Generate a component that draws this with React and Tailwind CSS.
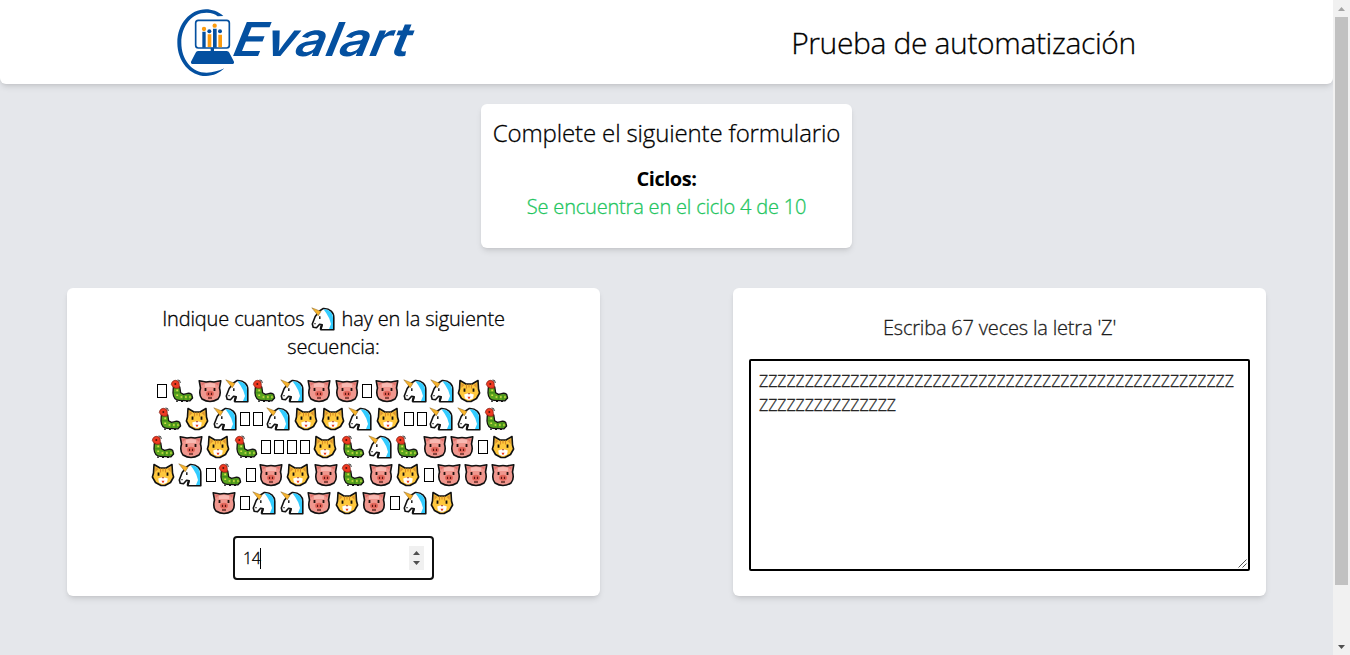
const ROWS = [
  "_bpubupp_puucb",
  "bcu__uccuc__uub",
  "bpcb____cbubpp_c",
  "cu_b_pcpbpc_ppp",
  "p_uupcp_uc",
];

function Unicorn() {
  return (
    <svg className="h-6 w-6" viewBox="0 0 24 24" role="img" aria-label="🦄">
      <path d="M8.5 4 L12 1.6 C19 1.2 23 5.5 22.8 11 L22.8 22.8 H9.8 L11.2 17.8 L8.6 17.2 L5.5 20.8 L2.2 20.3 L1.3 17 L4.2 9.5 Z" fill="#fff" stroke="#111" strokeWidth="1.6" strokeLinejoin="round" />
      <path d="M12.5 2.3 C18 2 22 6 22 11 V22 H18 L20 17 L18.3 11.5 L15.5 6.5 Z" fill="#33ccff" />
      <path d="M.8 .8 L10 4.4 L7.2 8.8 Z" fill="#f7b32b" stroke="#8a6420" strokeWidth=".5" />
      <path d="M8.8 9.3v2.8M3.4 16.6h1.2" stroke="#111" strokeWidth="1.4" fill="none" />
      <path d="M9.4 18.2H11.6L10.4 22.5H8.6Z" fill="#111" />
    </svg>
  );
}

function Pig() {
  return (
    <svg className="h-6 w-6" viewBox="0 0 24 24" role="img" aria-label="🐷">
      <path d="M1.2 1.7 L8 3 Q12 2 16 3 L22.8 1.7 L21.5 9 Q23.5 16 20 20 Q16 22.5 12 22.5 Q8 22.5 4 20 Q.5 16 2.5 9 Z" fill="#f0978e" stroke="#111" strokeWidth="1.6" strokeLinejoin="round" />
      <path d="M3 3.3L7 4.3L3.7 7ZM21 3.3L17 4.3L20.3 7Z" fill="#df746e" />
      <path d="M7 5Q12 3 17 5V8H7Z" fill="#f8b9b2" />
      <path d="M7.5 9v3M16.5 9v3" stroke="#24130f" strokeWidth="1.8" />
      <ellipse cx="12" cy="14.8" rx="4" ry="3" fill="#e4675b" />
      <path d="M10.5 13.7v2.2M13.5 13.7v2.2" stroke="#5c1714" strokeWidth="1.2" />
      <path d="M10 19h4" stroke="#4d1814" strokeWidth="1.3" />
    </svg>
  );
}

function Cat() {
  return (
    <svg className="h-6 w-6" viewBox="0 0 24 24" role="img" aria-label="🐱">
      <path d="M3 1.5 L9 5 H15 L21 1.5 L21.5 10 L22.6 14 L19.5 19.5 L14 22.5 H10 L4.5 19.5 L1.4 14 L2.5 10 Z" fill="#ffc83d" stroke="#111" strokeWidth="1.6" strokeLinejoin="round" />
      <path d="M4.3 4L7.5 6L4.3 9ZM19.7 4L16.5 6L19.7 9Z" fill="#dc9430" />
      <path d="M9.5 5.5v4M12 5.5v3M14.5 5.5v4" stroke="#d88a25" strokeWidth="1.1" />
      <path d="M7.5 9.5v3.2M16.5 9.5v3.2" stroke="#16110a" strokeWidth="1.8" />
      <path d="M12 14 L16.8 15.5 L16 19.5 L12 21.3 L8 19.5 L7.2 15.5 Z" fill="#fff" />
      <path d="M10.6 14h2.8L12 15.8Z" fill="#b5543a" />
      <path d="M10.5 17.7h3L12 20.5Z" fill="#f03a17" />
    </svg>
  );
}

function Bug() {
  return (
    <svg className="h-6 w-6" viewBox="0 0 24 24" role="img" aria-label="🐛">
      <path d="M3.3 8.5 L3 14 Q3.5 21 9 21.3 L20 21.8 L22.6 19 L21.6 15.2 Q19 13.6 16.5 14.7 L13.5 15.4 L10.6 13.7 L9.8 8Z" fill="#5aa51f" stroke="#111" strokeWidth="1.3" strokeLinejoin="round" />
      <path d="M1.3 5.5Q2 1.3 5.8 1.3Q9.5 1.6 9.3 5.5L9.3 9Q5 10 3 8Z" fill="#ee3a22" stroke="#7d1a0e" strokeWidth=".7" />
      <path d="M7.5 1L9.6 1.5L10.3 4" fill="none" stroke="#222" strokeWidth=".9" />
      <circle cx="5.3" cy="5" r="1" fill="#50150c" />
      <path d="M13.8 16v5M18 16v5M4.2 13.8h5.5" stroke="#347d16" strokeWidth=".8" />
      <path d="M6.3 11.4h1.8M6.3 16.2h1.8M10.6 18h1.7M15 18h1.7M19.2 18h1.5" stroke="#d8e04a" strokeWidth="1.6" />
      <path d="M6 22.1h2M11 22.5h2M16 22.5h2" stroke="#111" strokeWidth="1.1" />
    </svg>
  );
}

const GLYPHS = { u: Unicorn, p: Pig, c: Cat, b: Bug };

function Symbol({ kind }) {
  if (kind === "_") {
    return (
      <span className="flex h-7 w-[13px] items-center justify-center">
        <span className="h-[14px] w-[10px] border border-black" />
      </span>
    );
  }
  const Glyph = GLYPHS[kind];
  return (
    <span className="flex h-7 w-[27.45px] items-center justify-center pr-px">
      <Glyph />
    </span>
  );
}

function Logo() {
  return (
    <svg className="ml-[176px] h-[70px] w-[240px]" viewBox="18 24 720 210" role="img">
      <path fill="#0450a0" d="M160 48C145 34 125 28 108 28C60 28 22 72 22 128C22 184 60 228 108 228C130 228 150 218 163 205C148 212 128 218 110 218C65 218 34 178 34 128C34 78 65 38 110 38C125 38 135 42 143 49Z" />
      <rect x="77" y="61" width="101" height="83" rx="8" fill="#fff" stroke="#0450a0" strokeWidth="5" />
      <path fill="#0450a0" d="M122 143h10v10h-10zM84 153h86q6 0 8 5l14 27q1 7-6 7H69q-7 0-6-7l14-27q2-5 7-5z" />
      <path fill="#0450a0" d="M97 95h10v48H97zM129 86h11v57h-11z" />
      <path fill="#fb9b0e" d="M113 103h11v38h-11zM145 104h11v38h-11z" />
      <g fill="#fb9b0e"><circle cx="102" cy="87" r="6.5" /><circle cx="134" cy="77" r="6.5" /></g>
      <g fill="#0450a0"><circle cx="118" cy="94" r="6" /><circle cx="150" cy="94" r="6" /></g>
      <text transform="translate(178 167) skewX(-22)" x="0" y="0" fontFamily="Inter, sans-serif" fontWeight="600" fontSize="140" textLength="530" lengthAdjust="spacingAndGlyphs" fill="#0450a0">Evalart</text>
    </svg>
  );
}

export default function App() {
  return (
    <div className="flex h-[655px] w-[1350px] overflow-hidden bg-[#e5e7eb] font-['Open_Sans','Noto_Sans',sans-serif] font-light text-black [-webkit-text-stroke:0.3px_currentColor]">
      <div className="flex w-[1333px] flex-col">
        <header className="flex h-[84px] shrink-0 rounded-b-md bg-white pt-2 shadow-md">
          <div className="w-[594px] [-webkit-text-stroke:0]"><Logo /></div>
          <h1 className="flex-1 pt-[17px] text-center text-[30px] leading-9 tracking-[-0.37px]">Prueba de automatización</h1>
        </header>

        <section className="mx-auto mt-5 h-36 w-[371px] rounded-md bg-white pt-[13px] text-center shadow-md">
          <h2 className="text-2xl leading-8 tracking-[-0.14px] whitespace-nowrap">Complete el siguiente formulario</h2>
          <p className="mt-4 text-xl leading-7 font-bold tracking-[-0.5px] [-webkit-text-stroke:0]">Ciclos:</p>
          <p className="text-xl leading-7 tracking-[-0.19px] text-[#22c55e]">Se encuentra en el ciclo 4 de 10</p>
        </section>

        <main className="mt-10 flex justify-between px-[67px]">
          <section className="flex h-[308px] w-[533px] flex-col items-center rounded-md bg-white pt-[17px] shadow-md">
            <div className="text-center text-xl leading-7 tracking-[-0.15px]">
              <p className="flex h-7 items-center justify-center">
                <span>Indique cuantos</span>
                <span className="mr-[7px] ml-[6px]"><Unicorn /></span>
                <span>hay en la siguiente</span>
              </p>
              <p>secuencia:</p>
            </div>
            <div className="mt-4 flex flex-col items-center">
              {ROWS.map((row) => (
                <div key={row} className="flex h-7 justify-center">
                  {[...row].map((kind, i) => <Symbol key={i} kind={kind} />)}
                </div>
              ))}
            </div>
            <div className="mt-[19px] flex h-11 w-[201px] items-center rounded-[4px] border-2 border-[#101010] bg-white pr-2 pl-2">
              <span className="text-base tracking-[-0.5px]">14</span>
              <span className="h-[21px] w-px bg-black" />
              <span className="ml-auto flex h-6 w-[15px] flex-col items-center justify-between bg-[#f0f0f0] py-[5px]">
                <svg className="h-1 w-[7px]" viewBox="0 0 7 4"><path d="M0 4L3.5 0L7 4Z" fill="#505050" /></svg>
                <svg className="h-1 w-[7px]" viewBox="0 0 7 4"><path d="M0 0L3.5 4L7 0Z" fill="#505050" /></svg>
              </span>
            </div>
          </section>

          <section className="flex h-[308px] w-[533px] flex-col items-center rounded-md bg-white pt-[26px] shadow-md">
            <p className="text-xl leading-7 tracking-[-0.18px] text-[#1c1c1c]">Escriba 67 veces la letra 'Z'</p>
            <div className="relative mt-[17px] h-[212px] w-[501px] rounded-[2px] border-2 border-black bg-white px-2 pt-2 text-base leading-6 tracking-[-0.08px] text-[#1c1c1c]">
              <p>{"Z".repeat(52)}</p>
              <p>{"Z".repeat(15)}</p>
              <svg className="absolute right-[1px] bottom-[1px] h-[9px] w-[9px]" viewBox="0 0 9 9">
                <path d="M.5 8.5L8.5 .5M4.5 8.5L8.5 4.5" stroke="#555" strokeWidth="1" />
              </svg>
            </div>
          </section>
        </main>
      </div>

      <div className="flex w-[17px] flex-col items-center bg-[#f1f1f1]">
        <span className="flex h-[17px] items-center justify-center">
          <svg className="h-1 w-[7px]" viewBox="0 0 7 4"><path d="M0 4L3.5 0L7 4Z" fill="#a3a3a3" /></svg>
        </span>
        <span className="h-[568px] w-[13px] bg-[#c1c1c1]" />
        <span className="mt-auto flex h-[17px] items-center justify-center">
          <svg className="h-1 w-[7px]" viewBox="0 0 7 4"><path d="M0 0L3.5 4L7 0Z" fill="#505050" /></svg>
        </span>
      </div>
    </div>
  );
}
